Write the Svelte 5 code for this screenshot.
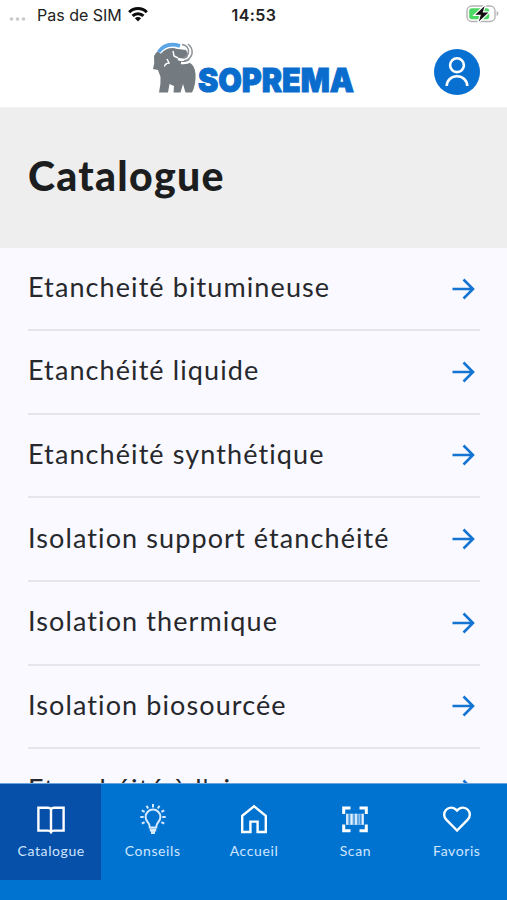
<script lang="ts">
	const categories = [
		'Etancheité bitumineuse',
		'Etanchéité liquide',
		'Etanchéité synthétique',
		'Isolation support étanchéité',
		'Isolation thermique',
		'Isolation biosourcée',
		"Etanchéité à l'air"
	];

	const tabs = [
		{ id: 'book', label: 'Catalogue' },
		{ id: 'bulb', label: 'Conseils' },
		{ id: 'home', label: 'Accueil' },
		{ id: 'scan', label: 'Scan' },
		{ id: 'heart', label: 'Favoris' }
	];

	let active = $state('book');
</script>

<div class="screen">
	<div class="status">
		<div class="carrier">
			<svg class="dots" width="18" height="6" viewBox="0 0 18 6" fill="#c9c9c9">
				<circle cx="2.5" cy="3" r="1.8" />
				<circle cx="8.5" cy="3" r="1.8" />
				<circle cx="14.5" cy="3" r="1.8" />
			</svg>
			<span>Pas de SIM</span>
			<svg class="wifi" width="20" height="16" viewBox="0 0 20 16">
				<g fill="none" stroke="#0b0b0b" stroke-width="3">
					<path d="M1.2 6.2a12.4 12.4 0 0 1 17.6 0" />
					<path d="M4.6 9.9a7.6 7.6 0 0 1 10.8 0" />
				</g>
				<path d="M6.9 12.2a4.4 4.4 0 0 1 6.2 0L10 15.5z" fill="#0b0b0b" />
			</svg>
		</div>
		<span class="time">14:53</span>
		<svg class="battery" width="33" height="18" viewBox="0 0 33 18">
			<rect x="1" y="1" width="28" height="15.5" rx="4.8" fill="#fff" stroke="#b4b4b4" stroke-width="1.4" />
			<path d="M30.6 6v5.2q1.8-.8 1.8-2.6T30.6 6z" fill="#b4b4b4" />
			<rect x="3.2" y="3.2" width="20" height="11" rx="2.6" fill="#4bd964" />
			<path d="M18.6 1L9.3 9.7h5.6L12.8 16.6L22.4 7.4h-5.7z" fill="#111" stroke="#fff" stroke-width="2.4" paint-order="stroke" />
		</svg>
	</div>

	<header>
		<svg class="logo" width="204" height="56" viewBox="0 0 204 56">
			<!-- elephant -->
			<path
				d="M2 14Q5 8 11 7Q18 4 26 7L34 8L37 14L38 21Q43 24 43.5 32Q44 43 40 50.500H33.500L31 42L28.500 50.500H21.500L22 44L17.500 42L16 50.500H7Q9 42 8.500 35L6 28L1 27Q3 21 2 14z"
				fill="#737b81"
			/>
			<path d="M6.500 10Q14 0 28 4" fill="none" stroke="#fff" stroke-width="6" />
			<path d="M6.500 10Q14 -.5 28 4" fill="none" stroke="#5aa5e6" stroke-width="3.6" />
			<path d="M15 17l2 4q-4 .5-4.500 3.500M21 9l1 5 4 2" fill="none" stroke="#fff" stroke-width="1.4" />
			<path d="M26 17q10 3 12-5 0-6-6-9M29 21q11 1 13-8 0-7-4-11" fill="none" stroke="#fff" stroke-width="2.4" />
			<path d="M30 2.500q6 1 6.500 6t-5 7.500M36 2q5 4 4 10-2 6-8 7" fill="none" stroke="#8b9196" stroke-width="1.500" />
			<text class="brand" x="46" y="50" textLength="156" lengthAdjust="spacingAndGlyphs">SOPREMA</text>
		</svg>
		<button class="profile" aria-label="Profil">
			<svg width="46" height="46" viewBox="0 0 46 46" fill="none" stroke="#fff" stroke-width="2.6">
				<circle cx="23" cy="16.2" r="6.900" />
				<path d="M12.800 37v-.2a10.200 9.600 0 0 1 20.400 0v.2" />
			</svg>
		</button>
	</header>

	<div class="heading">
		<h1>Catalogue</h1>
	</div>

	<main>
		{#each categories as category}
			<div class="row">
				<span>{category}</span>
				<svg class="arrow" width="24" height="24" viewBox="0 0 24 24">
					<path d="M1.5 12H22M12.500 2.500L22 12l-9.500 9.500" />
				</svg>
			</div>
		{/each}
	</main>

	<nav>
		{#each tabs as tab}
			<button class="tab" class:active={active === tab.id} onclick={() => (active = tab.id)}>
				<svg width="32" height="32" viewBox="0 0 32 32" fill="none" stroke="#fff" stroke-width="2.4">
					{#if tab.id === 'book'}
						<path d="M16 6.5Q15 4.8 13 4.8H3.4v22.8H13q2 0 3 1.2 1-1.2 3-1.2h9.600V4.800H19q-2 0-3 1.700zM16 6.500v24" />
					{:else if tab.id === 'bulb'}
						<g stroke="#d8eaff" stroke-width="2">
							<path d="M12.8 24.5q0-3-2-5.3Q8.600 16.800 8.600 14a7.400 7.400 0 0 1 14.800 0q0 2.800-2.200 5.200-2 2.300-2 5.300z" />
							<path d="M16 1v3.400M9.500 2.800l1.700 2.800M22.500 2.800l-1.700 2.800M4.800 7.300l2.800 1.600M27.200 7.300l-2.800 1.600M3.300 14h3.400M25.300 14h3.400M4.800 20.700l2.800-1.600M27.200 20.700l-2.800-1.600" />
							<path d="M12.800 27h6.400M14 29.500h4" stroke-width="2.800" />
						</g>
					{:else if tab.id === 'home'}
						<path d="M4.200 29V12.800L16 3.200l11.800 9.600V29h-8.200V18.600h-7.200V29z" />
					{:else if tab.id === 'scan'}
						<path d="M4.700 11V5h6.800M20.500 5h6.800v6M27.300 21.500v6.200h-6.800M11.500 27.700H4.700v-6.200" stroke-width="3" />
						<rect x="7.200" y="10.800" width="17.800" height="11" fill="#8fc2ef" stroke="none" />
						<path d="M8 10.800v11M12.600 10.800v11M17 10.800v11M23.800 10.800v11" stroke="#e4f1ff" stroke-width="1.600" />
						<path d="M10.300 11.500v9.600M15 11.500v9.600M19 11.500v9.600M21.700 11.500v9.600" stroke="#2584d5" stroke-width=".9" />
					{:else}
						<path d="M16 27.500L5.300 16.600A6.900 6.900 0 0 1 15 6.600l1 1 1-1a6.900 6.900 0 0 1 9.700 10z" />
					{/if}
				</svg>
				<span>{tab.label}</span>
			</button>
		{/each}
	</nav>
</div>

<style>
	:global(body) {
		background: #fff;
	}

	.screen {
		display: flex;
		flex-direction: column;
		width: 507px;
		height: 900px;
		overflow: hidden;
		background-color: #faf9ff;
		font-family: Lato, 'Open Sans', sans-serif;
		color: #26282c;
	}

	.status {
		display: grid;
		grid-template-columns: 1fr auto 1fr;
		align-items: center;
		flex: none;
		height: 30px;
		padding: 0 8px 0 9px;
		background-color: #fff;
		font-family: Inter, 'Liberation Sans', sans-serif;
		font-size: 16px;
		color: #222;
	}

	.carrier {
		display: flex;
		align-items: center;
	}

	.dots {
		margin: 7px 10px 0 0;
	}

	.wifi {
		margin: -2px 0 0 6px;
	}

	.time {
		font-weight: 600;
		letter-spacing: 0.4px;
	}

	.battery {
		justify-self: end;
		margin-top: -2px;
	}

	header {
		display: flex;
		align-items: center;
		justify-content: space-between;
		flex: none;
		box-sizing: border-box;
		height: 78px;
		padding: 6px 27px 0 152px;
		background-color: #fff;
		border-bottom: 1px solid #f2f2f2;
	}

	.logo {
		margin-top: -4px;
		overflow: visible;
	}

	.brand {
		font-family: Inter, 'Liberation Sans', sans-serif;
		font-size: 33px;
		font-weight: 900;
		fill: #0a6dcd;
		stroke: #0a6dcd;
		stroke-width: 1px;
	}

	.profile {
		display: flex;
		width: 46px;
		height: 46px;
		padding: 0;
		border: none;
		border-radius: 50%;
		background-color: #0870d0;
	}

	.heading {
		display: flex;
		align-items: center;
		flex: none;
		height: 140px;
		padding-left: 28px;
		background-color: #eeeeee;
	}

	h1 {
		margin: 0 0 5px;
		font-size: 41px;
		font-weight: 900;
		line-height: 50px;
		letter-spacing: 1.3px;
		color: #1b1d1e;
	}

	main {
		flex: 1;
		min-height: 0;
		overflow: hidden;
		padding: 0 27px 0 28px;
	}

	.row {
		display: flex;
		align-items: center;
		justify-content: space-between;
		box-sizing: border-box;
		height: 83.65px;
		padding-right: 5px;
		border-bottom: 2px solid #e6e5e9;
		font-size: 27px;
		letter-spacing: 1.1px;
		white-space: nowrap;
	}

	.row:first-child {
		height: 83px;
	}

	.row span {
		margin-top: -4px;
	}

	.arrow {
		fill: none;
		stroke: #1374d2;
		stroke-width: 2.6;
	}

	nav {
		display: flex;
		flex: none;
		box-sizing: border-box;
		height: 117px;
		padding-bottom: 20px;
		background-color: #0073d1;
		border-top: 1px solid #6aa6dc;
	}

	.tab {
		display: flex;
		flex: 1;
		flex-direction: column;
		align-items: center;
		padding: 19px 0 0 1px;
		border: none;
		background: none;
		font-family: inherit;
		font-size: 14px;
		line-height: 18px;
		letter-spacing: 0.6px;
		color: #cfe6ff;
	}

	.tab span {
		margin-top: 7px;
	}

	.active {
		background-color: #0650aa;
	}
</style>
